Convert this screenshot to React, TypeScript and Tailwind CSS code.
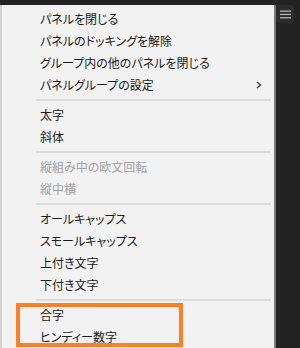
import React from "react";

type Item =
  | { kind: "item"; label: string; disabled?: boolean; sub?: boolean }
  | { kind: "sep" };

const items: Item[] = [
  { kind: "item", label: "パネルを閉じる" },
  { kind: "item", label: "パネルのドッキングを解除" },
  { kind: "item", label: "グループ内の他のパネルを閉じる" },
  { kind: "item", label: "パネルグループの設定", sub: true },
  { kind: "sep" },
  { kind: "item", label: "太字" },
  { kind: "item", label: "斜体" },
  { kind: "sep" },
  { kind: "item", label: "縦組み中の欧文回転", disabled: true },
  { kind: "item", label: "縦中横", disabled: true },
  { kind: "sep" },
  { kind: "item", label: "オールキャップス" },
  { kind: "item", label: "スモールキャップス" },
  { kind: "item", label: "上付き文字" },
  { kind: "item", label: "下付き文字" },
  { kind: "sep" },
  { kind: "item", label: "合字" },
  { kind: "item", label: "ヒンディー数字" },
];

export default function App() {
  return (
    <div className="relative w-[300px] h-[348px] overflow-hidden bg-[#232323] flex items-start font-['Noto_Sans_CJK_JP','Noto_Sans',sans-serif] [font-feature-settings:'palt']">
      <div className="mt-[5px] w-[276px] h-[343px] bg-[#f2f2f2] border-l-2 border-l-[#d2d2d2] border-r-2 border-r-[#7a7a7a] pt-[3px] flex flex-col">
        {items.map((it, i) =>
          it.kind === "sep" ? (
            <div key={i} className="h-[2px] my-[3px] ml-[34px] mr-[3px] bg-[#dcdcdc]" />
          ) : (
            <div
              key={i}
              className={`h-[22px] flex items-center pl-[38px] pr-[12px] text-[12px] leading-none ${
                it.disabled ? "text-[#a3a3a3]" : "text-[#1c1c1c]"
              }`}
            >
              <span className="flex-1">{it.label}</span>
              {it.sub && (
                <svg width="6" height="8" viewBox="0 0 6 8">
                  <path d="M1 1 L4.5 4 L1 7" fill="none" stroke="#3a3a3a" strokeWidth="1.4" />
                </svg>
              )}
            </div>
          )
        )}
      </div>
      <div className="ml-[0px] mt-[5px] w-[18px] h-[18px] rounded-[3px] bg-[#2c2c2c] flex items-center justify-center">
        <svg width="11" height="9" viewBox="0 0 11 9">
          <rect x="0" y="0.5" width="11" height="1.3" fill="#b4b4b4" />
          <rect x="0" y="3.8" width="11" height="1.3" fill="#b4b4b4" />
          <rect x="0" y="7.1" width="11" height="1.3" fill="#b4b4b4" />
        </svg>
      </div>
      <div className="absolute left-[16px] top-[303px] w-[167px] h-[44px] border-[4px] border-[#ff7f27]" />
    </div>
  );
}
